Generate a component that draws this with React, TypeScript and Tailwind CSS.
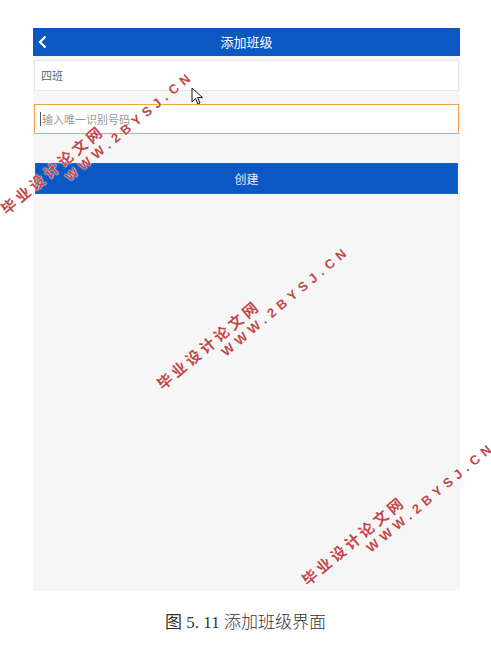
import React from "react";

const CJK = "font-['Noto_Sans_CJK_SC','Noto_Sans',sans-serif]";

function Watermark({ left, top }: { left: number; top: number }) {
  // overlay stamp, rotated like the scanned source
  return (
    <div
      className="pointer-events-none absolute origin-top-left -rotate-[40deg] text-[#c24848] font-bold [text-shadow:0_0_1px_#fff,0_0_2px_#fff]"
      style={{ left, top }}
    >
      <div className={`${CJK} whitespace-nowrap text-[15px] leading-[18px] tracking-[3.5px]`}>
        毕业设计论文网
      </div>
      <div className="ml-[70px] whitespace-nowrap font-['Liberation_Sans',sans-serif] text-[13px] leading-[16px] tracking-[5px]">
        WWW.2BYSJ.CN
      </div>
    </div>
  );
}

function Cursor() {
  return (
    <svg
      className="pointer-events-none absolute left-[191px] top-[87px]"
      width="14"
      height="19"
      viewBox="0 0 14 19"
    >
      <path
        d="M1 1 L1 15 L4.5 11.5 L7 17 L9 16 L6.6 10.6 L11.5 10.6 Z"
        fill="#fff"
        stroke="#111"
        strokeWidth="1"
        strokeLinejoin="round"
      />
    </svg>
  );
}

export default function App() {
  return (
    <div className="relative h-[660px] w-[491px] overflow-hidden bg-white">
      <div className="pt-[28px] pl-[33px]">
        <div className="flex h-[563px] w-[427px] flex-col bg-[#f6f6f6]">
          <header className="relative flex h-[28px] items-center justify-center bg-[#0b57c4]">
            <svg
              className="absolute left-[5px] top-[7px]"
              width="9"
              height="14"
              viewBox="0 0 9 14"
            >
              <path d="M7.5 1.5 L2 7 L7.5 12.5" fill="none" stroke="#fff" strokeWidth="2.2" />
            </svg>
            <span className={`${CJK} text-[13px] text-white`}>添加班级</span>
          </header>

          <div className="flex flex-col px-[1px] pt-[4px]">
            <div className="flex h-[31px] items-center border border-[#e6e6e6] bg-white pl-[6px]">
              <span className={`${CJK} text-[11px] text-[#666]`}>四班</span>
            </div>
            <div className="mt-[13px] flex h-[30px] items-center border border-[#eea24a] bg-white pl-[5px]">
              <span className="mr-[1px] h-[14px] w-px bg-[#555]" />
              <span className={`${CJK} text-[11px] text-[#999]`}>输入唯一识别号码</span>
            </div>
            <button className="mx-[1px] mt-[29px] flex h-[31px] items-center justify-center border border-[#1e63c6] bg-[#0b57c4]">
              <span className={`${CJK} text-[12px] text-[#e3ecfa]`}>创建</span>
            </button>
          </div>
        </div>
      </div>

      <div className="mt-[17px] flex justify-center">
        <span className="font-['Liberation_Serif','Noto_Sans_CJK_SC',serif] text-[17px] text-[#333]">
          图 5. 11 <span className={`${CJK} font-light text-[17px]`}>添加班级界面</span>
        </span>
      </div>

      <Cursor />
      <Watermark left={-3} top={204} />
      <Watermark left={153} top={379} />
      <Watermark left={298} top={575} />
    </div>
  );
}
